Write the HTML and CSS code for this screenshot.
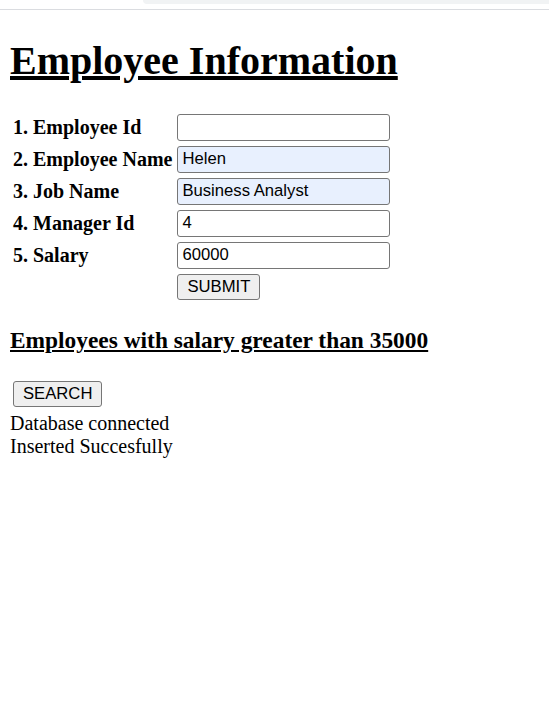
FILE: index.html
```html
<!DOCTYPE html>
<html>
<head>
<meta charset="utf-8">
<title>Employee Information</title>
<link rel="stylesheet" href="styles.css">
</head>
<body>
<div class="chrome"><div class="chrome-tab"></div></div>
<main class="page">
  <h1 class="title">Employee Information</h1>
  <form class="emp-form">
    <table class="form-table">
      <tr><th class="label">1. Employee Id</th><td><input class="field" type="text" value=""></td></tr>
      <tr><th class="label">2. Employee Name</th><td><input class="field autofill" type="text" value="Helen"></td></tr>
      <tr><th class="label">3. Job Name</th><td><input class="field autofill" type="text" value="Business Analyst"></td></tr>
      <tr><th class="label">4. Manager Id</th><td><input class="field" type="text" value="4"></td></tr>
      <tr><th class="label">5. Salary</th><td><input class="field" type="text" value="60000"></td></tr>
      <tr><th class="label"></th><td><button class="btn" type="button">SUBMIT</button></td></tr>
    </table>
  </form>
  <h3 class="subtitle">Employees with salary greater than 35000</h3>
  <table class="form-table search-table">
    <tr><td><button class="btn" type="button">SEARCH</button></td></tr>
  </table>
  <div class="msg">Database connected</div>
  <div class="msg">Inserted Succesfully</div>
</main>
</body>
</html>
```
FILE: styles.css
```css
html, body {
  margin: 0;
  padding: 0;
  background: #ffffff;
}
body {
  font-family: "Liberation Serif", "Times New Roman", serif;
  font-size: 20px;
  color: #000;
}
.chrome {
  height: 9px;
  border-bottom: 1px solid #dadce0;
}
.chrome-tab {
  margin-left: 143px;
  height: 4px;
  background: #f1f3f4;
  border-bottom-left-radius: 10px;
}
.page {
  margin: 0 10px;
}
.title {
  font-size: 40px;
  font-weight: bold;
  text-decoration: underline;
  margin: 26.8px 0;
}
.emp-form {
  margin: 0;
}
.form-table {
  border-collapse: separate;
  border-spacing: 3px;
  margin: -1px 0 0 -1px;
}
.search-table {
  margin-top: 1px;
  margin-bottom: 1px;
}
.form-table th,
.form-table td {
  padding: 1px;
  vertical-align: middle;
}
.label {
  text-align: left;
  font-weight: bold;
  white-space: nowrap;
}
.field {
  box-sizing: border-box;
  width: 213px;
  height: 27px;
  margin: 0;
  padding: 0 4px;
  border: 1px solid #767676;
  border-radius: 3px;
  background: #ffffff;
  font-family: "Liberation Sans", Arial, sans-serif;
  font-size: 16.67px;
  color: #000;
  display: block;
}
.field.autofill {
  background: #e8f0fe;
}
.btn {
  box-sizing: border-box;
  height: 26px;
  margin: 0;
  padding: 0 9px;
  border: 1px solid #767676;
  border-radius: 3px;
  background: #efefef;
  font-family: "Liberation Sans", Arial, sans-serif;
  font-size: 16.67px;
  color: #000;
  display: block;
}
.subtitle {
  font-size: 23.4px;
  font-weight: bold;
  text-decoration: underline;
  margin: 23.4px 0;
}
.msg {
  line-height: 23px;
}
```
